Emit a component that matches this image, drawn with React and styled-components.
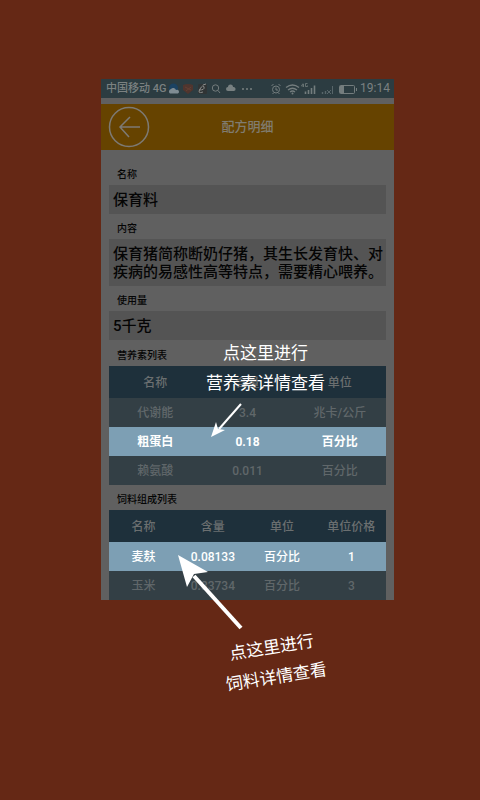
import React from "react";
import styled, { createGlobalStyle, css } from "styled-components";

const GlobalStyle = createGlobalStyle`
  * { box-sizing: border-box; }
  body {
    margin: 0;
    background: #652815;
    font-family: Roboto, "Noto Sans CJK SC", sans-serif;
  }
`;

const Page = styled.main`
  min-height: 100vh;
  padding: 79px 86px 200px 101px;
  background: #652815;
`;

const Phone = styled.div`
  position: relative;
  background: #606060;
`;

const StatusBar = styled.div`
  display: flex;
  align-items: center;
  justify-content: space-between;
  height: 19px;
  padding: 0 4px 0 5px;
  background: #2c3c41;
  color: #7b8181;
  font-size: 11px;
  line-height: 19px;
  white-space: nowrap;
`;

const StatusGroup = styled.div`
  display: flex;
  align-items: center;
  gap: ${(p) => p.$gap}px;
`;

const Carrier = styled.span`
  font-weight: 500;
`;

const Clock = styled.time`
  font-size: 12px;
`;

const TitleBar = styled.header`
  display: grid;
  grid-template-columns: 56px 1fr 56px;
  align-items: center;
  height: 46px;
  margin-top: 6px;
  background: #664300;
`;

const BackButton = styled.button`
  display: flex;
  margin: 0;
  padding: 0 0 0 7px;
  border: 0;
  background: none;
  color: #7d7a74;
`;

const Title = styled.h1`
  margin: 0;
  color: #807c70;
  font-size: 13px;
  line-height: 20px;
  font-weight: 500;
  text-align: center;
`;

const Content = styled.div`
  padding: 15px 8px 0;
`;

const Field = styled.section`
  color: #050505;
`;

const Label = styled.h2`
  margin: 0;
  padding: 0 8px;
  font-size: 10px;
  line-height: 20px;
  font-weight: 500;
`;

const Value = styled.p`
  margin: 0 0 5px;
  padding: 6px 2px 5px 4px;
  background: #545454;
  font-size: 15px;
  line-height: 18px;
  font-weight: 500;
`;

const TableSection = styled(Field)`
  padding-top: ${(p) => p.$top || 0}px;
`;

const Table = styled.table`
  width: 100%;
  border-collapse: collapse;
  table-layout: fixed;
  font-size: 12px;
  line-height: 16px;
  text-align: center;
`;

const HeadCell = styled.th`
  height: 32px;
  padding: 2px 0 0;
  background: #1e303b;
  color: #6b6f70;
  font-weight: 500;
`;

const Row = styled.tr`
  background: #333f45;
  color: #60676a;
  font-weight: 500;
  ${(p) =>
    p.$active &&
    css`
      background: #7d9fb4;
      color: #fff;
      font-weight: ${p.$weight};
    `}
`;

const Cell = styled.td`
  height: 29px;
  padding: 0;
`;

const Hint = styled.p`
  position: absolute;
  margin: 0;
  color: #fff;
  font-size: 17px;
  font-weight: 400;
  line-height: 30px;
  text-align: center;
  white-space: nowrap;
`;

const NutrientHint = styled(Hint)`
  top: 259px;
  left: 105px;
`;

const FeedHint = styled(Hint)`
  top: 553px;
  left: 122px;
  transform: rotate(-9deg);
`;

const Arrow = styled.svg`
  position: absolute;
  left: ${(p) => p.$x}px;
  top: ${(p) => p.$y}px;
  pointer-events: none;
`;

function DataTable({ columns, rows, activeRow, weight }) {
  return (
    <Table>
      <thead>
        <tr>
          {columns.map((c) => (
            <HeadCell key={c} scope="col">{c}</HeadCell>
          ))}
        </tr>
      </thead>
      <tbody>
        {rows.map((row, i) => (
          <Row key={row[0]} $active={i === activeRow} $weight={weight}>
            {row.map((cell, j) => (
              <Cell key={j}>{cell}</Cell>
            ))}
          </Row>
        ))}
      </tbody>
    </Table>
  );
}

const NotificationIcons = () => (
  <svg width="86" height="12" viewBox="0 0 86 12" fill="none" aria-hidden="true">
    <circle cx="5.500" cy="5" r="4.500" fill="#1b4262" />
    <path d="M2 10.500a2.500 2.500 0 0 1 1-4.500 3 3 0 0 1 5 1 2 2 0 0 1 2 3.500z" fill="#7f8c93" />
    <path d="M15 2q5-2 10 0v5l-5 4-5-4z" fill="#50352e" />
    <path d="m17 4 6 3m-5 1 5-4" stroke="#643f33" />
    <rect x="30" y="1" width="9" height="10" rx="1" fill="#303435" />
    <path d="M31 7q6 0 5-3t-4 2 3 3M35 2l3-1" stroke="#8a8c8a" />
    <circle cx="47.500" cy="5" r="3.200" stroke="#747c7d" />
    <path d="m50 7.500 2 2.500" stroke="#747c7d" />
    <path d="M60 8a2 2 0 0 1 0-4 2.500 2.500 0 0 1 5 0 2 2 0 0 1 1 4z" fill="#788081" />
    <g fill="#788081"><circle cx="75" cy="6" r="1" /><circle cx="79" cy="6" r="1" /><circle cx="83" cy="6" r="1" /></g>
  </svg>
);

const SystemIcons = () => (
  <svg width="88" height="14" viewBox="0 0 88 14" fill="none" stroke="#747d7e" aria-hidden="true">
    <circle cx="6" cy="7.500" r="3.500" />
    <path d="M6 5.500v2.500h2M1.500 4l2-2M10.500 4l-2-2M3.500 11l-1 1M8.500 11l1 1" />
    <path d="M16 5.500q6.500-5 13 0M18 8q4.500-3.500 9 0M20 10q2.500-2 5 0" strokeWidth="1.300" />
    <circle cx="22.500" cy="11.500" r="1" fill="#747d7e" stroke="none" />
    <path d="M33 1.500 31.500 4h2M33.500 2v3M37.500 1.500h-2v3h2V3.500" strokeWidth=".8" />
    <path d="M35.500 12V9.500M38.500 12V8M41.500 12V6M44.500 12V3.500" strokeWidth="1.600" />
    <path d="M52.500 12v-2M55.500 12V9" stroke="#58666a" strokeWidth="1.400" />
    <path d="m57 8 4 4m0-4-4 4M62.500 12V4" stroke="#58666a" />
    <rect x="69.500" y="3.500" width="15" height="8" rx="1" />
    <path d="M70 4h4v7h-4z" fill="#747d7e" stroke="none" />
    <path d="M86.500 6v3" />
  </svg>
);

export default function App() {
  return (
    <>
      <GlobalStyle />
      <Page>
        <Phone>
          <StatusBar>
            <StatusGroup $gap={2}>
              <Carrier>中国移动 4G</Carrier>
              <NotificationIcons />
            </StatusGroup>
            <StatusGroup $gap={2}>
              <SystemIcons />
              <Clock>19:14</Clock>
            </StatusGroup>
          </StatusBar>
          <TitleBar>
            <BackButton type="button" aria-label="返回">
              <svg width="42" height="42" viewBox="0 0 42 42" fill="none" stroke="currentColor">
                <circle cx="21" cy="21" r="19.500" strokeWidth="1.500" />
                <path d="M32 21H12M22 11 12 21l9 10" strokeWidth="1.500" />
              </svg>
            </BackButton>
            <Title>配方明细</Title>
          </TitleBar>
          <Content>
            <Field>
              <Label>名称</Label>
              <Value>保育料</Value>
            </Field>
            <Field>
              <Label>内容</Label>
              <Value>保育猪简称断奶仔猪，其生长发育快、对疾病的易感性高等特点，需要精心喂养。</Value>
            </Field>
            <Field>
              <Label>使用量</Label>
              <Value>5千克</Value>
            </Field>
            <TableSection $top={1}>
              <Label>营养素列表</Label>
              <DataTable
                columns={["名称", "含量", "单位"]}
                rows={[
                  ["代谢能", "3.4", "兆卡/公斤"],
                  ["粗蛋白", "0.18", "百分比"],
                  ["赖氨酸", "0.011", "百分比"],
                ]}
                activeRow={1}
                weight={700}
              />
            </TableSection>
            <TableSection $top={5}>
              <Label>饲料组成列表</Label>
              <DataTable
                columns={["名称", "含量", "单位", "单位价格"]}
                rows={[
                  ["麦麸", "0.08133", "百分比", "1"],
                  ["玉米", "0.33734", "百分比", "3"],
                ]}
                activeRow={0}
                weight={500}
              />
            </TableSection>
          </Content>
          <NutrientHint>点这里进行<br />营养素详情查看</NutrientHint>
          <Arrow $x={109} $y={323} width="34" height="36" viewBox="0 0 34 36" aria-hidden="true">
            <path d="M31 2 9 27" stroke="#fff" strokeWidth="2" />
            <path d="m1 35 5-15 2 7 7 1z" fill="#fff" />
          </Arrow>
          <Arrow $x={76} $y={476} width="68" height="76" viewBox="0 0 68 76" aria-hidden="true">
            <path d="M64 73 17 21" stroke="#fff" strokeWidth="4" />
            <path d="m1 0 30 17-14 2-7 13z" fill="#fff" />
          </Arrow>
          <FeedHint>点这里进行<br />饲料详情查看</FeedHint>
        </Phone>
      </Page>
    </>
  );
}
